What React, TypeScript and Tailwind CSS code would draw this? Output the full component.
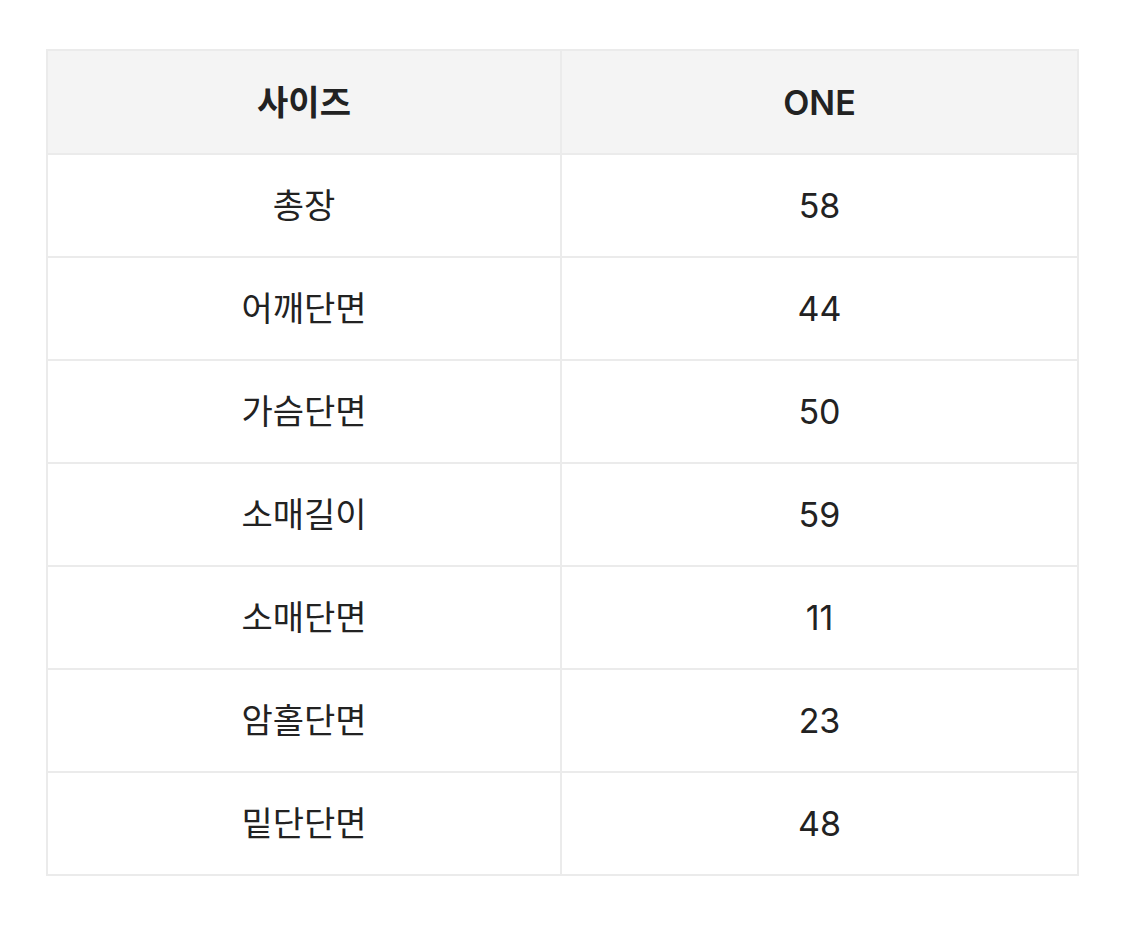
import React from "react";

const rows: [string, string][] = [
  ["총장", "58"],
  ["어깨단면", "44"],
  ["가슴단면", "50"],
  ["소매길이", "59"],
  ["소매단면", "11"],
  ["암홀단면", "23"],
  ["밑단단면", "48"],
];

export default function App() {
  return (
    <div
      className="w-[1125px] h-[933px] bg-white pt-[49px] pl-[46px]"
      style={{ fontFamily: 'Inter, "Noto Sans CJK KR", "Noto Sans", sans-serif' }}
    >
      <table className="w-[1033px] border-collapse table-fixed text-[34px] text-[#222222]">
        <colgroup>
          <col className="w-[514px]" />
          <col />
        </colgroup>
        <thead>
          <tr className="h-[104px] bg-[#f4f4f4]">
            <th className="border-2 border-[#ebebeb] font-semibold">사이즈</th>
            <th className="border-2 border-[#ebebeb] font-semibold">ONE</th>
          </tr>
        </thead>
        <tbody>
          {rows.map(([k, v]) => (
            <tr key={k} className="h-[103px]">
              <td className="border-2 border-[#ebebeb] text-center font-normal">{k}</td>
              <td className="border-2 border-[#ebebeb] text-center font-normal">{v}</td>
            </tr>
          ))}
        </tbody>
      </table>
    </div>
  );
}
